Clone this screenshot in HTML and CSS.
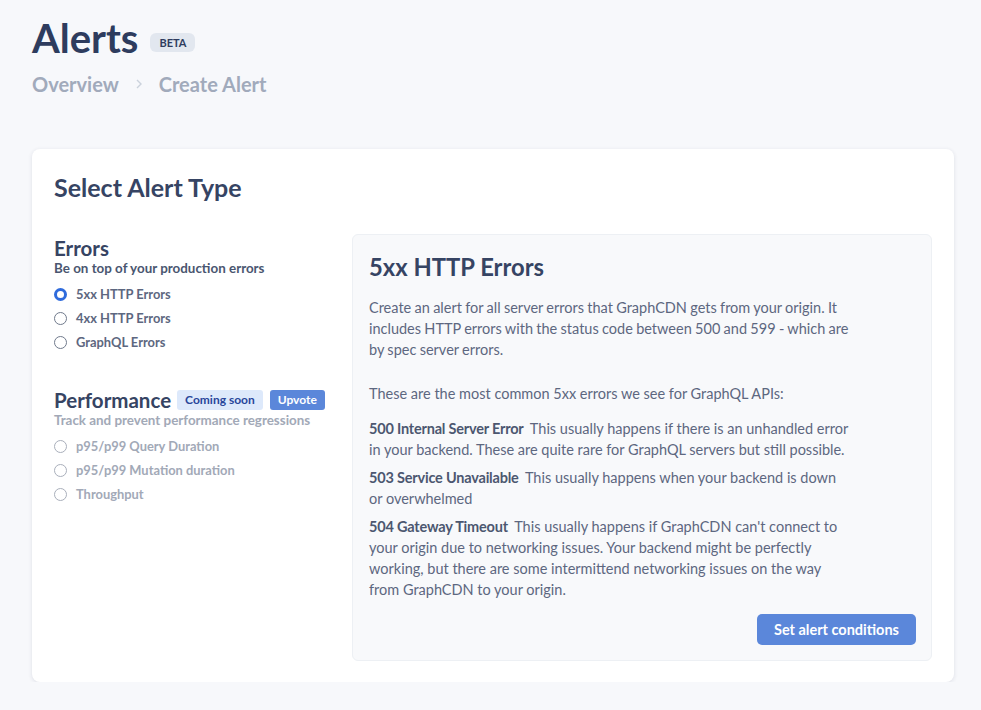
FILE: index.html
```html
<!DOCTYPE html>
<html lang="en">
<head>
    <meta charset="UTF-8">
    <meta name="viewport" content="width=device-width, initial-scale=1.0">
    <title>Alerts - Create Alert</title>
    <link rel="stylesheet" href="styles.css">
</head>
<body>
    <div class="page">
        <div class="title-row">
            <h1>Alerts</h1>
            <span class="beta">BETA</span>
        </div>
        <nav class="crumbs">
            <span>Overview</span>
            <svg class="chev" width="10" height="12" viewBox="0 0 10 12"><path d="M3 2l4 4-4 4" fill="none" stroke="#cbd2dc" stroke-width="1.4"/></svg>
            <span>Create Alert</span>
        </nav>

        <div class="card">
            <h2>Select Alert Type</h2>
            <div class="cols">
                <div class="types">
                    <div class="group">
                        <h3>Errors</h3>
                        <p class="sub">Be on top of your production errors</p>
                        <label class="opt"><span class="radio checked"></span>5xx HTTP Errors</label>
                        <label class="opt"><span class="radio"></span>4xx HTTP Errors</label>
                        <label class="opt"><span class="radio"></span>GraphQL Errors</label>
                    </div>
                    <div class="group disabled">
                        <h3>Performance <span class="tag soon">Coming soon</span><span class="tag upvote">Upvote</span></h3>
                        <p class="sub">Track and prevent performance regressions</p>
                        <label class="opt"><span class="radio"></span>p95/p99 Query Duration</label>
                        <label class="opt"><span class="radio"></span>p95/p99 Mutation duration</label>
                        <label class="opt"><span class="radio"></span>Throughput</label>
                    </div>
                </div>

                <div class="detail">
                    <h3>5xx HTTP Errors</h3>
                    <p class="intro">Create an alert for all server errors that GraphCDN gets from your origin. It includes HTTP errors with the status code between 500 and 599 - which are by spec server errors.</p>
                    <p class="gap">These are the most common 5xx errors we see for GraphQL APIs:</p>
                    <p class="code"><b>500 Internal Server Error</b> This usually happens if there is an unhandled error in your backend. These are quite rare for GraphQL servers but still possible.</p>
                    <p class="code"><b>503 Service Unavailable</b> This usually happens when your backend is down or overwhelmed</p>
                    <p class="code"><b>504 Gateway Timeout</b> This usually happens if GraphCDN can't connect to your origin due to networking issues. Your backend might be perfectly working, but there are some intermittend networking issues on the way from GraphCDN to your origin.</p>
                    <div class="actions">
                        <button>Set alert conditions</button>
                    </div>
                </div>
            </div>
        </div>
    </div>
</body>
</html>
```

FILE: styles.css
```css
body {
    margin: 0;
    background-color: #f7f8fb;
    font-family: Lato, Arial, sans-serif;
    color: #364463;
}
.page {
    padding: 14px 27px 0 32px;
}
.title-row {
    display: flex;
    align-items: center;
    gap: 12px;
}
h1 {
    margin: 0;
    font-size: 40px;
    font-weight: 700;
    color: #2e3c5e;
    line-height: 48px;
}
.beta {
    margin-top: 8px;
    background-color: #e2e7ef;
    color: #2e3c5e;
    font-size: 11px;
    font-weight: 700;
    padding: 3px 9px;
    border-radius: 6px;
}
.crumbs {
    display: flex;
    align-items: center;
    gap: 15px;
    margin-top: 10px;
    font-size: 20px;
    font-weight: 700;
    color: #a1aabb;
}
.card {
    margin-top: 53px;
    background-color: #fff;
    border-radius: 8px;
    box-shadow: 0 1px 4px rgba(30, 40, 70, 0.12);
    padding: 23px 22px 21px 22px;
}
h2 {
    margin: 0;
    font-size: 25px;
    font-weight: 700;
    line-height: 30px;
    color: #364463;
}
.cols {
    display: flex;
    gap: 22px;
    margin-top: 32px;
}
.types {
    width: 276px;
    flex-shrink: 0;
    padding-top: 2px;
}
.group {
    margin-bottom: 34px;
}
.group h3 {
    margin: 0;
    display: flex;
    align-items: center;
    font-size: 20.5px;
    font-weight: 700;
    line-height: 24px;
    color: #364463;
}
.sub {
    margin: 0 0 6px 0;
    font-size: 13.4px;
    font-weight: 700;
    color: #4a5670;
}
.opt {
    display: flex;
    align-items: center;
    gap: 9px;
    height: 24px;
    font-size: 12.9px;
    font-weight: 700;
    color: #5d6780;
}
.radio {
    width: 11px;
    height: 11px;
    border: 1px solid #707a8c;
    border-radius: 50%;
    background-color: #fff;
}
.radio.checked {
    width: 7px;
    height: 7px;
    border: 3px solid #2f6bdc;
    background-color: #fff;
}
.disabled .sub, .disabled .opt {
    color: #a2a9b7;
}
.disabled .radio {
    border-color: #a9afbb;
}
.tag {
    font-size: 12px;
    font-weight: 700;
    padding: 2px 8px;
    border-radius: 3px;
    line-height: 16px;
}
.soon {
    margin-left: 6px;
    background-color: #dde9fb;
    color: #28469a;
}
.upvote {
    margin-left: 7px;
    background-color: #5b87da;
    color: #fff;
}
.detail {
    flex: 1;
    background-color: #f8f9fb;
    border: 1px solid #edf0f4;
    border-radius: 6px;
    padding: 17px 15px 15px 16px;
}
.detail h3 {
    margin: 0 0 15px 0;
    font-size: 23.8px;
    font-weight: 700;
    line-height: 30px;
    color: #364463;
}
.detail p {
    margin: 0;
    max-width: 483px;
    font-size: 14.5px;
    line-height: 21px;
    color: #5d6780;
}
.detail p.intro {
    word-spacing: -0.4px;
}
.detail p.gap {
    margin-top: 23px;
}
.detail p.code {
    margin-top: 7px;
}
.detail p.gap + p.code {
    margin-top: 14px;
}
.detail b {
    font-weight: 700;
    letter-spacing: -0.2px;
    color: #4c5770;
    margin-right: 3px;
}
.actions {
    display: flex;
    justify-content: flex-end;
    margin-top: 14px;
}
button {
    background-color: #5b87da;
    color: #fff;
    border: none;
    border-radius: 5px;
    padding: 0 17px;
    height: 31px;
    font-family: inherit;
    font-size: 14.5px;
    font-weight: 700;
    cursor: pointer;
}
```
